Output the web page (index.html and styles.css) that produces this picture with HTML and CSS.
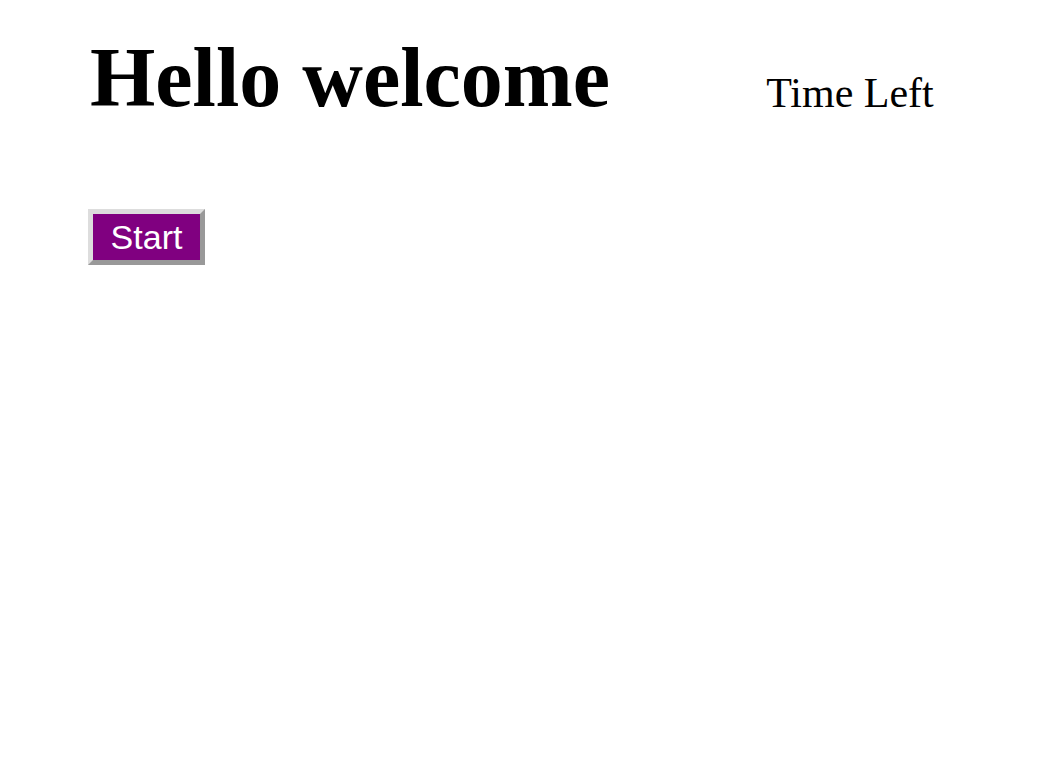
FILE: index.html
```html
<!DOCTYPE html>
<html>
<head>
<meta charset="utf-8">
<link rel="stylesheet" href="styles.css">
</head>
<body>
<div class="page">
  <header class="header">
    <h1 class="title">Hello welcome</h1>
    <div class="timer">Time Left</div>
  </header>
  <button class="start">Start</button>
</div>
</body>
</html>
```
FILE: styles.css
```css
html, body {
  margin: 0;
  padding: 0;
  background: #ffffff;
}
.page {
  padding: 36px 0 0 88px;
  font-family: "Liberation Serif", "Times New Roman", serif;
  color: #000;
}
.header {
  display: flex;
  align-items: flex-start;
  gap: 156px;
}
.title {
  margin: 0 0 0 2px;
  font-size: 84px;
  font-weight: bold;
  line-height: 1;
}
.timer {
  margin-top: 36px;
  font-size: 42px;
  line-height: 1;
}
.start {
  margin-top: 89px;
  display: block;
  background: #800080;
  color: #ffffff;
  font-family: "Liberation Sans", Arial, sans-serif;
  font-size: 34px;
  line-height: 46px;
  height: 56px;
  width: 117px;
  padding: 0;
  border-width: 5px;
  border-style: solid;
  border-color: #dddddd #999999 #999999 #dddddd;
}
```
